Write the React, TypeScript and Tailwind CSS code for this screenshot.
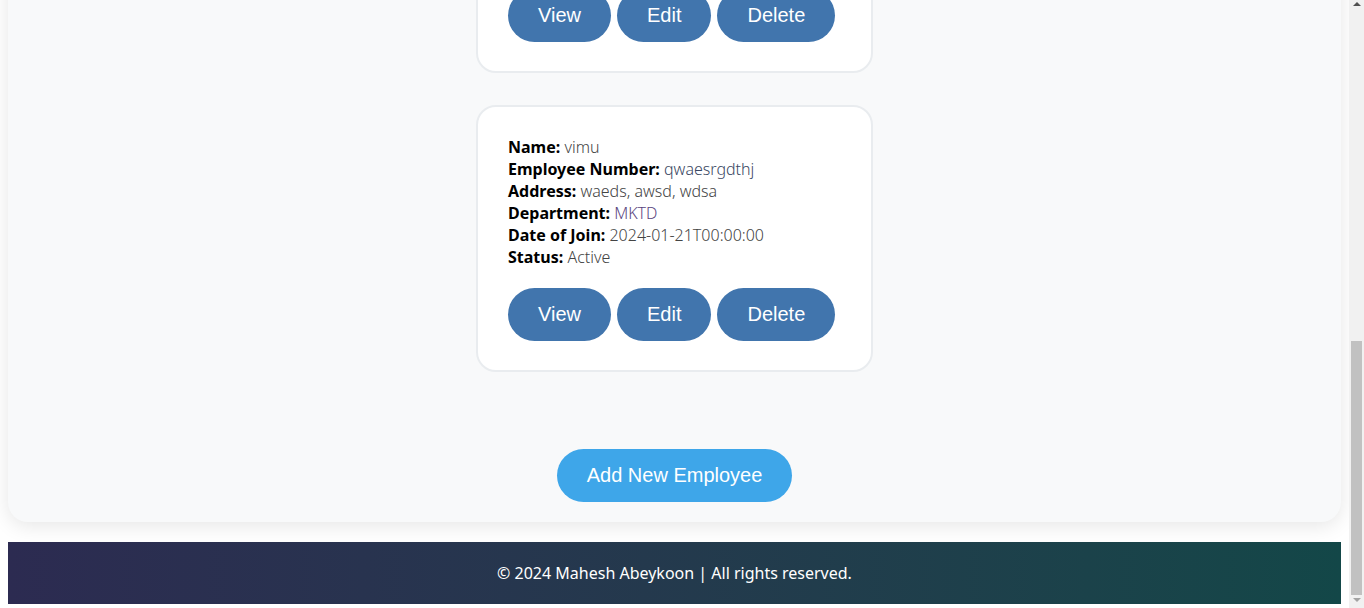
import React from 'react';

type Employee = {
  name: string;
  number: string;
  address: string;
  department: string;
  joined: string;
  status: string;
};

const employees: Employee[] = [
  {
    name: 'kasun',
    number: 'EMP-0012',
    address: 'main street, kandy, central',
    department: 'HR',
    joined: '2023-11-02T00:00:00',
    status: 'Active',
  },
  {
    name: 'vimu',
    number: 'qwaesrgdthj',
    address: 'waeds, awsd, wdsa',
    department: 'MKTD',
    joined: '2024-01-21T00:00:00',
    status: 'Active',
  },
];

function Field({ label, value, color }: { label: string; value: string; color: string }) {
  return (
    <p className="leading-[22px]">
      <span className="font-bold text-black">{label}:</span>{' '}
      <span className={`font-light ${color}`}>{value}</span>
    </p>
  );
}

function EmployeeCard({ emp }: { emp: Employee }) {
  const btn =
    "rounded-full bg-[#4175ad] px-[30px] py-[15px] text-[20px] leading-[23px] text-white font-['Liberation_Sans',Arial,sans-serif]";
  return (
    <div className="w-[397px] rounded-[20px] border-2 border-[#e9ecef] bg-white px-[30px] pt-[29px] pb-[29px]">
      <Field label="Name" value={emp.name} color="text-[#444]" />
      <Field label="Employee Number" value={emp.number} color="text-[#3a4763]" />
      <Field label="Address" value={emp.address} color="text-[#444]" />
      <Field label="Department" value={emp.department} color="text-[#5a4580]" />
      <Field label="Date of Join" value={emp.joined} color="text-[#444]" />
      <Field label="Status" value={emp.status} color="text-[#444]" />
      <div className="mt-[20px] flex gap-[6px]">
        <button className={btn}>View</button>
        <button className={btn}>Edit</button>
        <button className={btn}>Delete</button>
      </div>
    </div>
  );
}

export default function App() {
  return (
    <div className="flex h-[608px] overflow-hidden bg-white font-['Noto_Sans',sans-serif] text-[16px]">
      <div className="flex-1 overflow-hidden">
        <div className="mt-[-214px] px-2 pb-1">
          <main className="flex flex-col items-center rounded-[20px] bg-[#f8f9fa] pt-5 pb-5 shadow-[0_4px_20px_rgba(0,0,0,0.1)]">
            <div className="flex flex-col items-center gap-8">
              {employees.map((e) => (
                <EmployeeCard key={e.number} emp={e} />
              ))}
            </div>
            <button className="mt-[77px] rounded-full bg-[#3ea6e9] px-[30px] py-[15px] text-[20px] leading-[23px] text-white font-['Liberation_Sans',Arial,sans-serif]">
              Add New Employee
            </button>
          </main>
          <footer className="mt-5 flex h-[62px] items-center justify-center bg-gradient-to-r from-[#2c2b51] to-[#134748] text-white">
            © 2024 Mahesh Abeykoon | All rights reserved.
          </footer>
        </div>
      </div>
      <div className="flex w-[15px] flex-col items-center bg-[#f1f1f1]">
        <div className="mt-[2px] h-0 w-0 border-x-[4px] border-b-[4px] border-x-transparent border-b-[#505050]" />
        <div className="mt-[335px] h-[254px] w-[11px] bg-[#c1c1c1]" />
        <div className="mt-[3px] h-0 w-0 border-x-[4px] border-t-[4px] border-x-transparent border-t-[#a3a3a3]" />
      </div>
    </div>
  );
}
